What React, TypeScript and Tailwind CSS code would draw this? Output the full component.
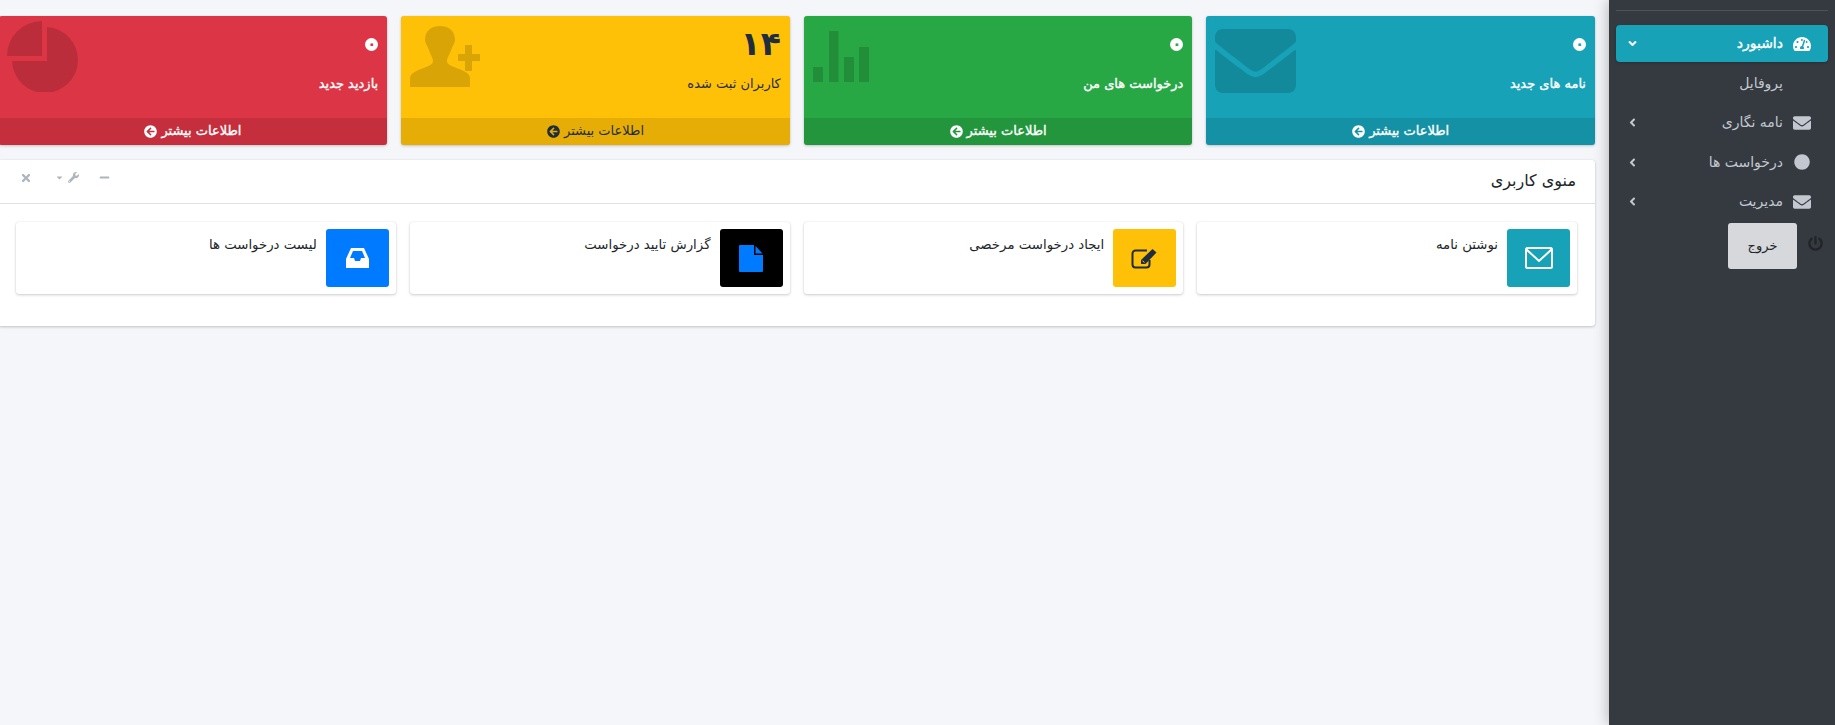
import React from "react";
import { FaTachometerAlt, FaEnvelope, FaCircle, FaPowerOff, FaAngleDown, FaAngleLeft, FaArrowCircleLeft, FaMinus, FaWrench, FaTimes, FaCaretDown } from "react-icons/fa";

const medium = "[-webkit-text-stroke:0.35px_currentColor]";

function BigEnvelope() {
  return (
    <svg viewBox="0 64 512 384" preserveAspectRatio="none" className="w-[81px] h-[64px] fill-black/15">
      <path d="M502.3 190.8c3.9-3.1 9.7-.2 9.7 4.7V400c0 26.5-21.5 48-48 48H48c-26.5 0-48-21.500-48-48V195.600c0-5 5.700-7.800 9.700-4.700 22.400 17.400 52.100 39.500 154.100 113.600 21.100 15.400 56.700 47.800 92.200 47.600 35.700.300 72-32.800 92.300-47.600 102-74.100 131.600-96.300 154-113.700zM256 320c23.200.400 56.600-29.200 73.400-41.400 132.700-96.300 142.800-104.700 173.400-128.700 5.800-4.500 9.200-11.500 9.200-18.900v-19c0-26.500-21.500-48-48-48H48C21.500 64 0 85.500 0 112v19c0 7.400 3.400 14.300 9.200 18.900 30.600 23.900 40.700 32.400 173.400 128.700 16.800 12.200 50.200 41.800 73.400 41.400z" />
    </svg>
  );
}
function Bars() {
  return (
    <svg viewBox="0 0 56 51" className="w-[56px] h-[51px] fill-black/15">
      <rect x="0" y="36" width="10" height="15" />
      <rect x="16" y="0" width="9.5" height="51" />
      <rect x="31" y="26" width="10" height="25" />
      <rect x="46" y="16" width="10" height="35" />
    </svg>
  );
}
function PersonAdd() {
  return (
    <svg viewBox="0 0 70 61" className="w-[70px] h-[61px] fill-black/15">
      <path d="M0 61V52c0-5 8-8 16-11 4-1.500 7-3 7-6 0-3-3-7-4.500-12C17 19 15 17 15 14 15 5 21 0 30 0s15 5 15 14c0 3-2 5-3.500 9-1.500 5-4.500 9-4.500 12 0 3 3 4.500 7 6 8 3 16 6 16 11v9z" />
      <path d="M55 19h7v9h8v7h-8v10h-7V35h-7v-7h7z" />
    </svg>
  );
}
function Pie() {
  return (
    <svg viewBox="0 0 71 71" className="w-[71px] h-[71px] fill-black/15">
      <path d="M35 0A35 35 0 0 0 0 35H35Z" />
      <path d="M40 6A33 33 0 1 1 5 40H40Z" />
    </svg>
  );
}
function ThinEnvelope() {
  return (
    <svg viewBox="0 0 28 22" className="w-[28px] h-[22px] fill-none stroke-white stroke-2">
      <rect x="1" y="1" width="26" height="20" rx="1.500" />
      <path d="M1.500 2.500L14 14L26.500 2.500" />
    </svg>
  );
}
function PencilSquare() {
  return (
    <svg viewBox="0 0 27 21" className="w-[27px] h-[21px]">
      <path d="M16 2.500H4.500A3 3 0 0 0 1.500 5.500V16.500A3 3 0 0 0 4.500 19.500H15.500A3 3 0 0 0 18.500 16.500V12" fill="none" stroke="#1f2d3d" strokeWidth="2" />
      <path d="M21.500 1L25.500 4.500L14.500 16H10V12Z" fill="#1f2d3d" />
      <path d="M11.500 12.800L13.500 14.500" stroke="#ffc107" strokeWidth="1" />
    </svg>
  );
}
function BlueFile() {
  return (
    <svg viewBox="0 0 24 27" className="w-[24px] h-[27px] fill-[#007bff]">
      <path d="M1 0H15V10H24V26A1 1 0 0 1 23 27H1A1 1 0 0 1 0 26V1A1 1 0 0 1 1 0Z" />
      <path d="M16.500 1L23.500 8.500H16.500Z" />
    </svg>
  );
}
function Tray() {
  return (
    <svg viewBox="0 0 23 20" className="w-[23px] h-[20px]">
      <path d="M5 0H18L23 11V20H0V11Z" fill="#fff" />
      <path d="M7 3H16L19 10H15L14 13H9L8 10H4Z" fill="#007bff" />
    </svg>
  );
}

type StatProps = { value: string; label: string; bg: string; zero?: string; dark?: boolean; icon: React.ReactNode; iconBox: string };
function Stat({ value, label, bg, zero, dark, icon, iconBox }: StatProps) {
  return (
    <div className={`relative w-[388.6px] shrink-0 h-[129px] rounded-[3px] overflow-hidden shadow-[0_0_1px_rgba(0,0,0,0.13),0_1px_3px_rgba(0,0,0,0.2)] flex flex-col ${bg} ${dark ? "text-[#1f2d3d]" : "text-white"}`}>
      <div className="flex-1 px-[9px] pt-[9px]">
        <div className="h-[40px] flex items-center leading-none">
          {zero ? (
            <span className={`w-[13px] h-[13px] -mt-[1px] rounded-full bg-white flex items-center justify-center text-[15px] font-bold ${zero}`}>{value}</span>
          ) : (
            <span className="text-[33px] font-bold -mt-[4px]">{value}</span>
          )}
        </div>
        <div className={`mt-[9px] text-[13px] leading-[20px] ${dark ? "" : medium}`}>{label}</div>
      </div>
      <div className={`absolute ${iconBox}`}>{icon}</div>
      <div className={`h-[27px] bg-black/10 flex items-center justify-center gap-[4px] text-[13px] ${dark ? "" : medium}`}>
        <span className="-mt-[1px]">اطلاعات بیشتر</span>
        <FaArrowCircleLeft className="text-[13px] -mt-[1px]" />
      </div>
    </div>
  );
}

function Tile({ color, text, icon }: { color: string; text: string; icon: React.ReactNode }) {
  return (
    <div className="w-[379.75px] shrink-0 h-[72px] bg-white rounded-[3px] shadow-[0_0_1px_rgba(0,0,0,0.13),0_1px_3px_rgba(0,0,0,0.2)] p-[7px] flex">
      <div className={`w-[63px] h-[58px] rounded-[3px] flex items-center justify-center ${color}`}>{icon}</div>
      <div className="mr-[9px] mt-[7px] text-[13.3px] leading-[17px] text-[#212529]">{text}</div>
    </div>
  );
}

function NavItem({ icon, label, active, arrow }: { icon?: React.ReactNode; label: string; active?: boolean; arrow?: "left" | "down" }) {
  return (
    <div className={`h-[37px] rounded-[4px] flex items-center pr-[17px] pl-[10px] ${active ? `bg-[#17a2b8] text-white shadow-[0_1px_3px_rgba(0,0,0,0.2)] ${medium}` : "text-[#c2c7d0]"}`}>
      <span className="w-[18px] flex justify-center text-[18px] shrink-0">{icon}</span>
      <span className="mr-[10px] text-[14px]">{label}</span>
      {arrow === "down" && <FaAngleDown className="mr-auto text-[13px]" />}
      {arrow === "left" && <FaAngleLeft className="mr-auto text-[13px]" />}
    </div>
  );
}

export default function App() {
  return (
    <div className="flex w-full h-screen overflow-hidden bg-[#f4f6f9] font-['DejaVu_Sans',sans-serif]">
      <main dir="rtl" className="w-[1609px] shrink-0 overflow-hidden pt-4 pr-[14px]">
        <div className="flex gap-[14px]">
          <Stat value="۰" zero="text-[#17a2b8]" label="نامه های جدید" bg="bg-[#17a2b8]" icon={<BigEnvelope />} iconBox="left-[9px] top-[13px]" />
          <Stat value="۰" zero="text-[#28a745]" label="درخواست های من" bg="bg-[#28a745]" icon={<Bars />} iconBox="left-[9px] top-[15px]" />
          <Stat value="۱۴" label="کاربران ثبت شده" bg="bg-[#ffc107]" dark icon={<PersonAdd />} iconBox="left-[9px] top-[10px]" />
          <Stat value="۰" zero="text-[#dc3545]" label="بازدید جدید" bg="bg-[#dc3545]" icon={<Pie />} iconBox="left-[8px] top-[5px]" />
        </div>
        <section className="mt-[15px] w-[1597px] h-[166px] bg-white rounded-[3px] shadow-[0_0_1px_rgba(0,0,0,0.13),0_1px_3px_rgba(0,0,0,0.2)]">
          <header className="h-[44px] border-b border-[#dee2e6] flex items-center justify-between pr-[19px] pl-[22px]">
            <h2 className="text-[16px] text-[#212529] font-normal -mt-[2px]">منوی کاربری</h2>
            <div className="flex items-center text-[#adb5bd] text-[11px] -mt-[8px]">
              <FaMinus />
              <FaWrench className="mr-[20px]" />
              <FaCaretDown className="mr-[4px] text-[9px]" />
              <FaTimes className="mr-[23px] text-[12px]" />
            </div>
          </header>
          <div className="flex gap-[14px] pt-[18px] pr-[18px]">
            <Tile color="bg-[#17a2b8]" text="نوشتن نامه" icon={<ThinEnvelope />} />
            <Tile color="bg-[#ffc107]" text="ایجاد درخواست مرخصی" icon={<PencilSquare />} />
            <Tile color="bg-black" text="گزارش تایید درخواست" icon={<BlueFile />} />
            <Tile color="bg-[#007bff]" text="لیست درخواست ها" icon={<Tray />} />
          </div>
        </section>
      </main>
      <aside dir="rtl" className="w-[226px] shrink-0 h-full bg-[#343a40] px-[7px] shadow-[0_0_14px_rgba(0,0,0,0.3)] z-10">
        <div className="mt-[10px] border-t border-[#4b545c] mb-[14px]" />
        <nav className="flex flex-col gap-[2.5px]">
          <NavItem active label="داشبورد" icon={<FaTachometerAlt />} arrow="down" />
          <NavItem label="پروفایل" />
          <NavItem label="نامه نگاری" icon={<FaEnvelope />} arrow="left" />
          <NavItem label="درخواست ها" icon={<FaCircle className="text-[16px]" />} arrow="left" />
          <NavItem label="مدیریت" icon={<FaEnvelope />} arrow="left" />
        </nav>
        <div className="flex items-center mt-[3px] pr-[5px]">
          <FaPowerOff className="text-[#212529] text-[15px] -mt-[5px]" />
          <button className="mr-[11px] w-[69px] h-[46px] rounded-[3px] bg-[#d6d8db] text-[13px] text-[#212529]">خروج</button>
        </div>
      </aside>
    </div>
  );
}
